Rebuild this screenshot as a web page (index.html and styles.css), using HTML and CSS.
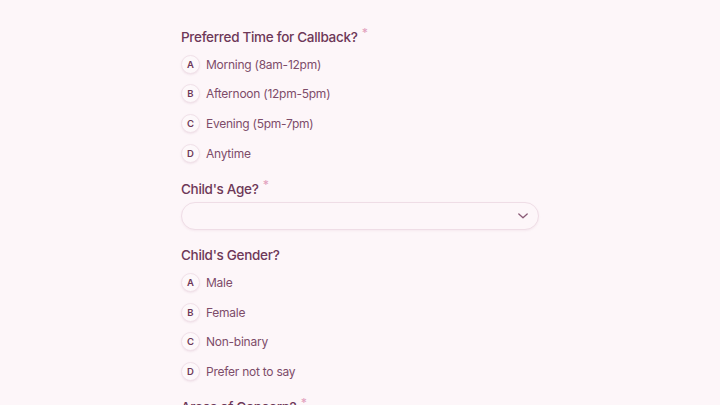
FILE: index.html
```html
<!DOCTYPE html>
<html lang="en">
<head>
<meta charset="utf-8">
<link rel="stylesheet" href="styles.css">
</head>
<body>
<main class="form">
  <section class="field">
    <h2 class="label">Preferred Time for Callback? <span class="req">*</span></h2>
    <ul class="options">
      <li class="option"><span class="key">A</span><span class="text">Morning (8am-12pm)</span></li>
      <li class="option"><span class="key">B</span><span class="text">Afternoon (12pm-5pm)</span></li>
      <li class="option"><span class="key">C</span><span class="text">Evening (5pm-7pm)</span></li>
      <li class="option"><span class="key">D</span><span class="text">Anytime</span></li>
    </ul>
  </section>
  <section class="field">
    <h2 class="label">Child's Age? <span class="req">*</span></h2>
    <div class="select">
      <svg class="chev" width="12" height="8" viewBox="0 0 12 8"><path d="M1.8 2 L6 5.8 L10.2 2" fill="none" stroke="#8a5a76" stroke-width="1.3" stroke-linecap="round" stroke-linejoin="round"/></svg>
    </div>
  </section>
  <section class="field">
    <h2 class="label">Child's Gender?</h2>
    <ul class="options">
      <li class="option"><span class="key">A</span><span class="text">Male</span></li>
      <li class="option"><span class="key">B</span><span class="text">Female</span></li>
      <li class="option"><span class="key">C</span><span class="text">Non-binary</span></li>
      <li class="option"><span class="key">D</span><span class="text">Prefer not to say</span></li>
    </ul>
  </section>
  <section class="field">
    <h2 class="label">Areas of Concern? <span class="req">*</span></h2>
  </section>
</main>
</body>
</html>
```

FILE: styles.css
```css
html, body {
  margin: 0;
  padding: 0;
  background: #fdf6f9;
  height: 100%;
  overflow: hidden;
}
body {
  font-family: "Inter", "Noto Sans", sans-serif;
  color: #7a4a66;
}
.form {
  width: 358px;
  margin: 0 auto;
  padding-top: 27px;
  display: flex;
  flex-direction: column;
  gap: 15.5px;
}
.label {
  margin: 0;
  font-size: 13.5px;
  font-weight: 500;
  letter-spacing: -0.3px;
  color: #6e3858;
  line-height: 20px;
  height: 20px;
}
.req {
  position: relative;
  top: -5px;
  color: #e3a3c0;
  font-size: 12px;
  margin-left: 1px;
}
.options {
  list-style: none;
  margin: 7px 0 0;
  padding: 0;
  display: flex;
  flex-direction: column;
  gap: 9.75px;
}
.option {
  display: flex;
  align-items: center;
  gap: 6px;
  height: 20px;
}
.key {
  box-sizing: border-box;
  width: 19px;
  height: 19px;
  border-radius: 50%;
  border: 1px solid #f1e1e9;
  background: #fdf8fa;
  box-shadow: 0 1px 2px rgba(160, 90, 130, 0.12);
  display: flex;
  align-items: center;
  justify-content: center;
  font-size: 9.5px;
  font-weight: 600;
  color: #6e3858;
}
.text {
  font-size: 12px;
  letter-spacing: -0.25px;
  color: #7d4c69;
}
.select {
  box-sizing: border-box;
  margin-top: 3px;
  height: 28px;
  border: 1px solid #efdde6;
  border-radius: 14px;
  background: #fdf6f9;
  box-shadow: 0 1px 2px rgba(160, 90, 130, 0.08);
  display: flex;
  align-items: center;
  justify-content: flex-end;
  padding-right: 9px;
}
```
